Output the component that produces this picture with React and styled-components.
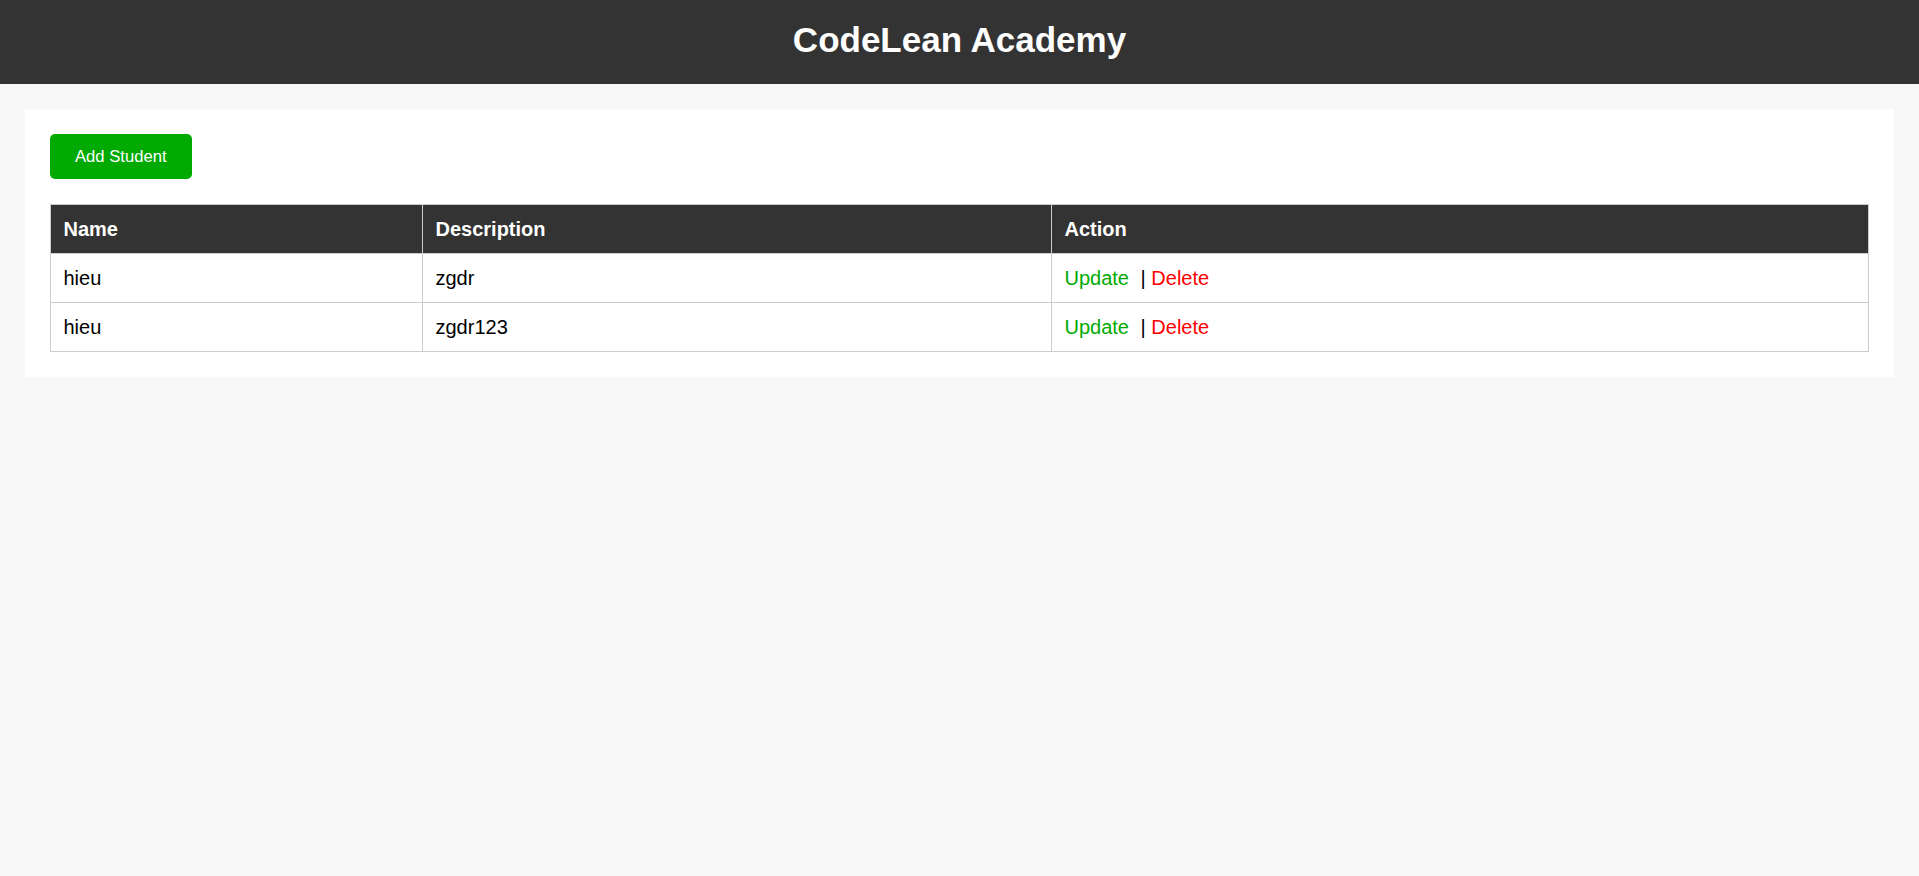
import React from 'react';
import styled, {createGlobalStyle} from 'styled-components';

const GlobalStyle = createGlobalStyle`
  body {
    margin: 0;
    background-color: #f8f8f8;
    font-family: "Liberation Sans", Arial, sans-serif;
    color: #000;
  }
`;

const Header = styled.header`
  background-color: #333;
  color: #fff;
  text-align: center;
  padding: 20px 0 24px;
`;

const Title = styled.h1`
  margin: 0;
  font-size: 35px;
  line-height: 40px;
  font-weight: 700;
`;

const Container = styled.main`
  margin: 25px;
  padding: 25px;
  background-color: #fff;
`;

const AddButton = styled.button`
  display: block;
  background-color: #00aa00;
  color: #fff;
  border: none;
  border-radius: 5px;
  padding: 12.5px 25px;
  font-family: inherit;
  font-size: 16.67px;
  line-height: 20px;
  cursor: pointer;
  margin-bottom: 25px;
`;

const Table = styled.table`
  width: 100%;
  border-collapse: collapse;
  font-size: 20px;
`;

const HeadCell = styled.th`
  background-color: #333;
  color: #fff;
  text-align: left;
  font-weight: 700;
  padding: 12.5px;
  border: 1px solid #ccc;
  width: ${props => props.width || 'auto'};
`;

const Cell = styled.td`
  padding: 12.5px;
  border: 1px solid #ccc;
`;

const ActionLink = styled.a`
  color: ${props => props.danger ? '#ff0000' : '#00aa00'};
  text-decoration: none;
  cursor: pointer;
  margin-right: ${props => props.danger ? '0' : '6px'};
`;

const students = [
    {name: 'hieu', description: 'zgdr'},
    {name: 'hieu', description: 'zgdr123'},
];

export default function App() {
    return (
        <>
            <GlobalStyle/>
            <Header>
                <Title>CodeLean Academy</Title>
            </Header>
            <Container>
                <AddButton>Add Student</AddButton>
                <Table>
                    <thead>
                    <tr>
                        <HeadCell width="346px">Name</HeadCell>
                        <HeadCell width="603px">Description</HeadCell>
                        <HeadCell>Action</HeadCell>
                    </tr>
                    </thead>
                    <tbody>
                    {students.map((s, i) =>
                        <tr key={i}>
                            <Cell>{s.name}</Cell>
                            <Cell>{s.description}</Cell>
                            <Cell>
                                <ActionLink>Update</ActionLink> | <ActionLink danger>Delete</ActionLink>
                            </Cell>
                        </tr>
                    )}
                    </tbody>
                </Table>
            </Container>
        </>
    );
}
